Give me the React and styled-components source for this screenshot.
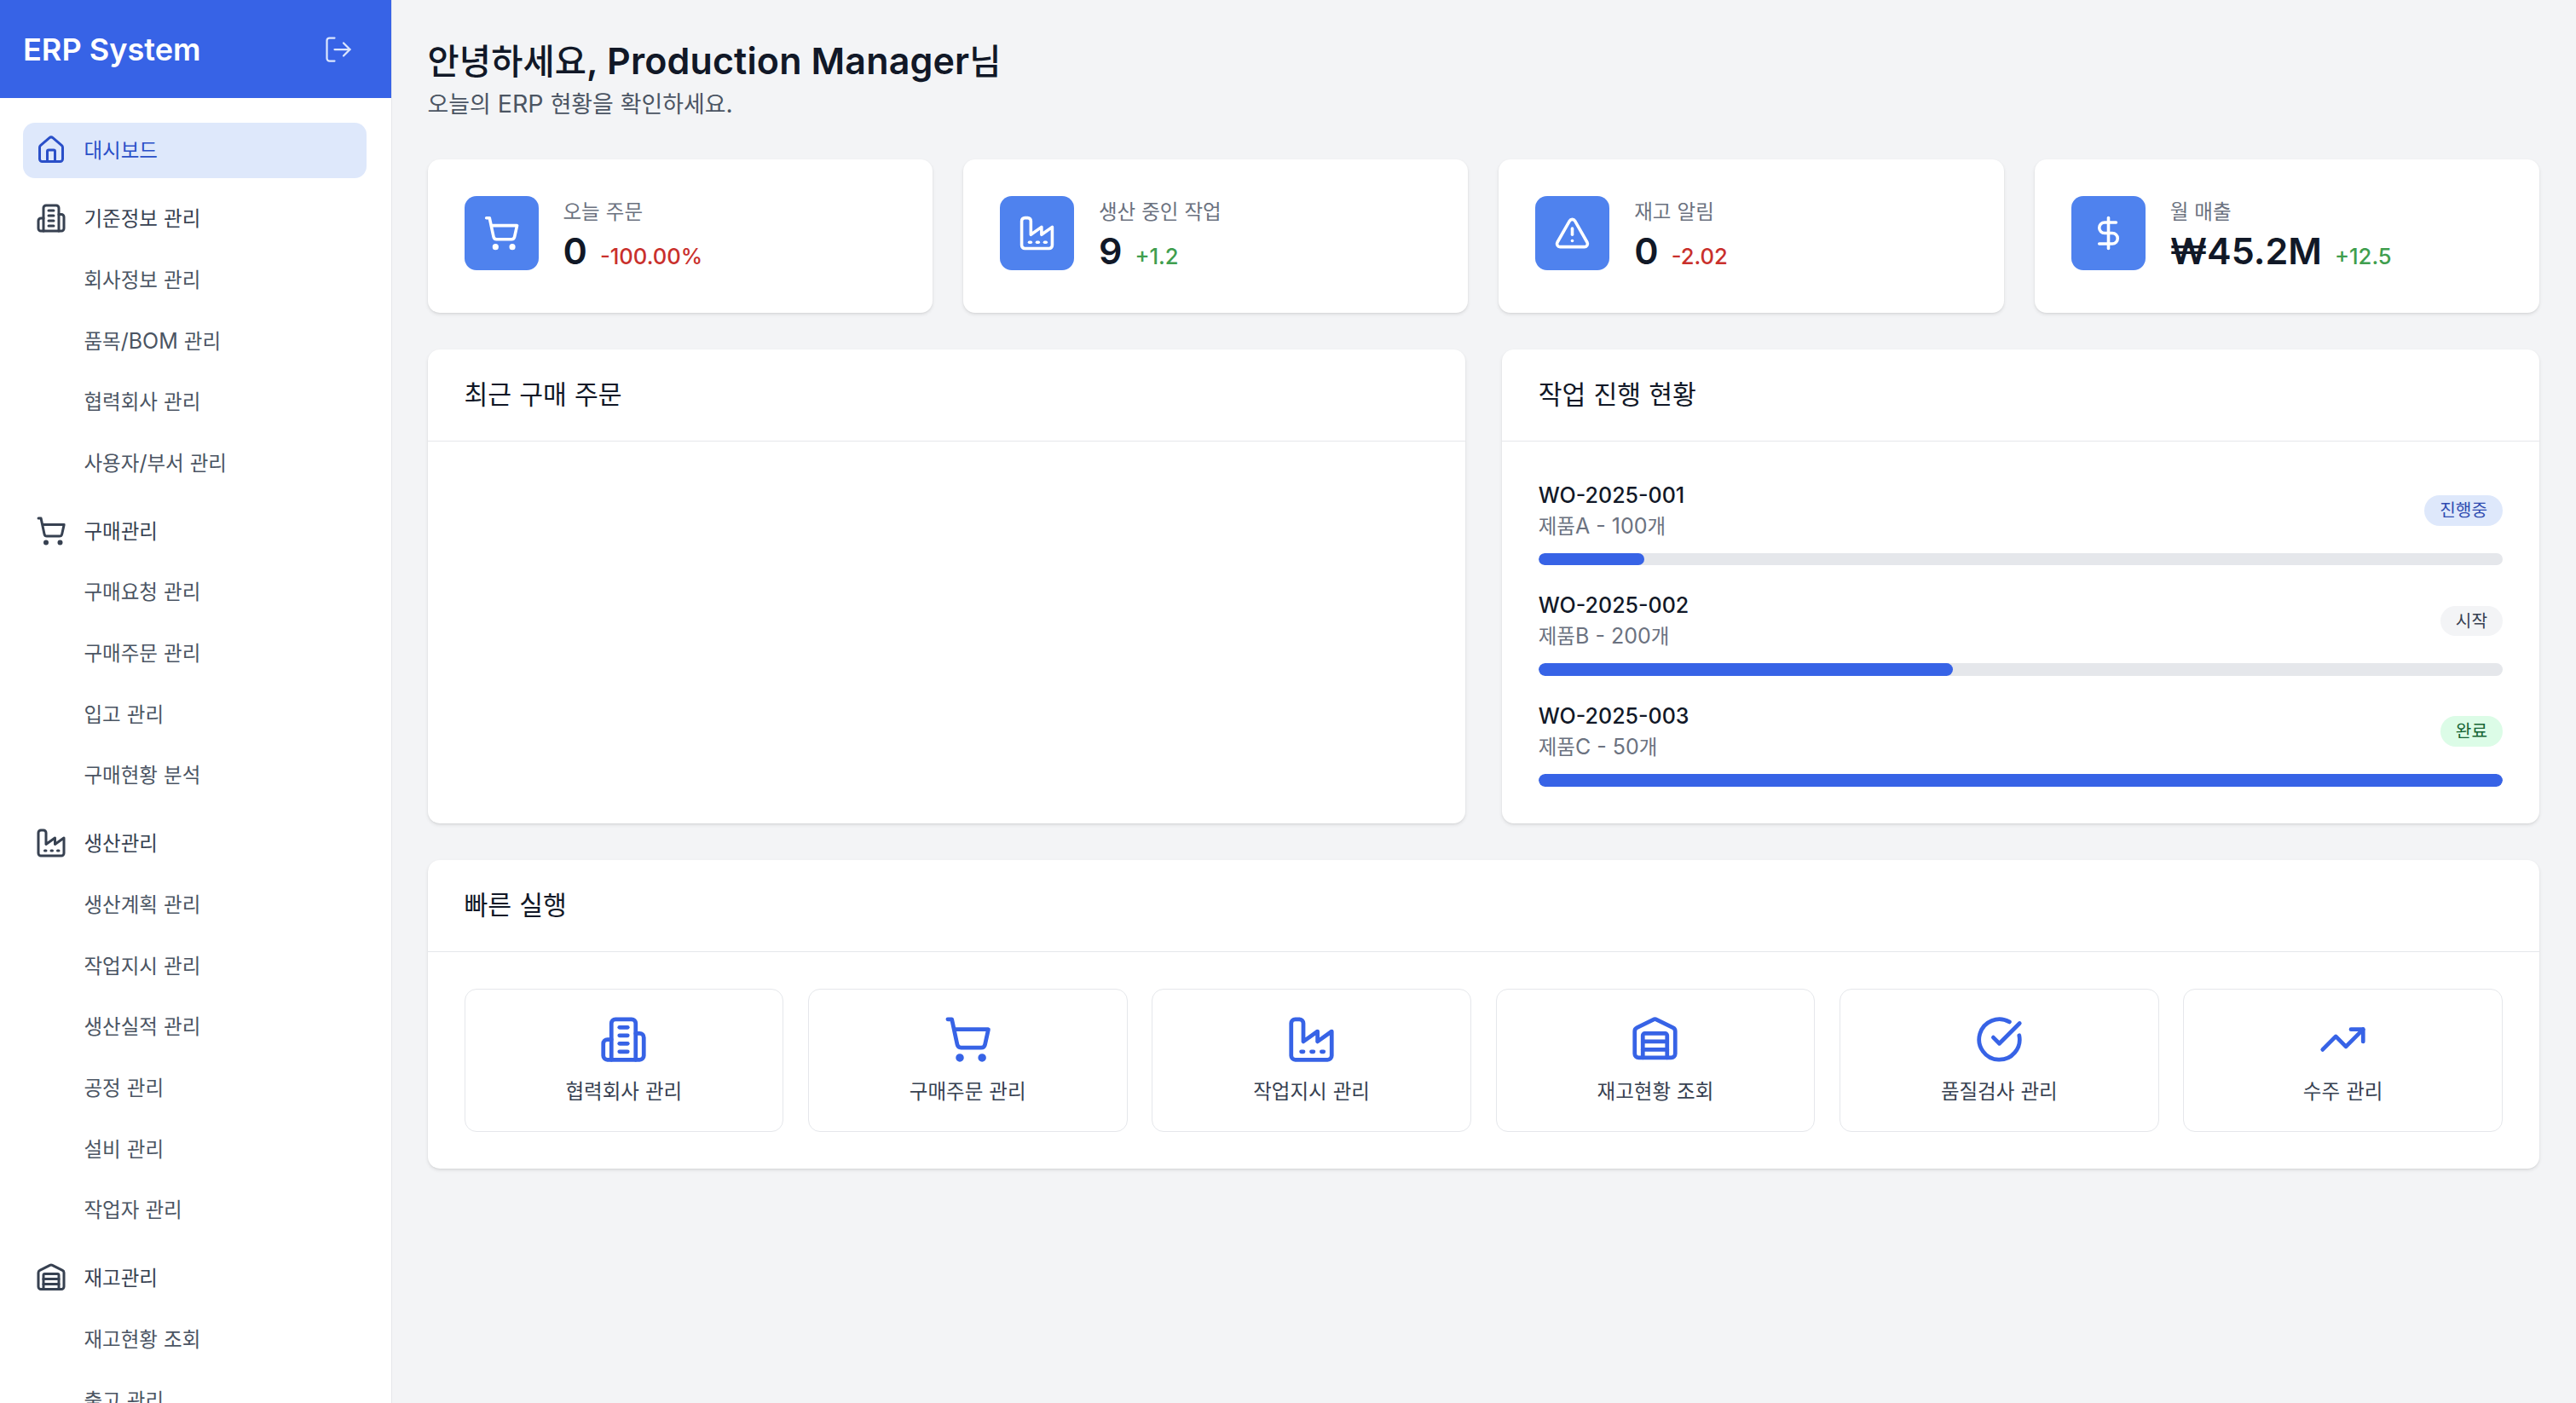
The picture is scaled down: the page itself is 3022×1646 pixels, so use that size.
import React from 'react';
import styled, { createGlobalStyle } from 'styled-components';
import { House, ShoppingCart, Warehouse, LogOut, TriangleAlert, DollarSign, CircleCheckBig, TrendingUp } from 'lucide-react';

const Global = createGlobalStyle`
  html, body { margin: 0; padding: 0; height: 100%; background: #f3f4f6; overflow: hidden; }
  * { box-sizing: border-box; }
  body { font-family: Inter, "Noto Sans CJK KR", sans-serif; color: #111827; }
`;

const HangulRun = styled.span`
  font-family: "Noto Sans CJK KR", sans-serif;
  font-size: 0.94em;
  line-height: 0;
  font-weight: ${p => p.$weight || 400};
`;

function K({ children, weight }) {
  const parts = String(children).split(/([가-힣]+)/);
  return <>{parts.map((p, i) => (/[가-힣]/.test(p) ? <HangulRun key={i} $weight={weight}>{p}</HangulRun> : p))}</>;
}

const IconSvg = styled.svg`
  fill: none; stroke: currentColor; stroke-width: 2; stroke-linecap: round; stroke-linejoin: round;
`;
const Building = () => (
  <IconSvg viewBox="0 0 24 24">
    <path d="M6 22V4a2 2 0 0 1 2-2h8a2 2 0 0 1 2 2v18Z" />
    <path d="M6 12H4a2 2 0 0 0-2 2v6a2 2 0 0 0 2 2h2" />
    <path d="M18 9h2a2 2 0 0 1 2 2v9a2 2 0 0 1-2 2h-2" />
    <path d="M10 6h4" /><path d="M10 10h4" /><path d="M10 14h4" /><path d="M10 18h4" />
  </IconSvg>
);
const Plant = () => (
  <IconSvg viewBox="0 0 24 24">
    <path d="M2 20a2 2 0 0 0 2 2h16a2 2 0 0 0 2-2V8l-7 5V8l-7 5V4a2 2 0 0 0-2-2H4a2 2 0 0 0-2 2Z" />
    <path d="M17 18h1" /><path d="M12 18h1" /><path d="M7 18h1" />
  </IconSvg>
);

const Shell = styled.div`display: flex; width: 100vw; height: 100vh; overflow: hidden;`;
const Sidebar = styled.aside`
  flex: 0 0 459.5px; height: 100%; background: #fff; border-right: 1.5px solid #e5e7eb;
  overflow: hidden; display: flex; flex-direction: column;
`;
const Brand = styled.div`
  flex: 0 0 115px; background: #3763e6; color: #fff; display: flex; align-items: center;
  justify-content: space-between; padding: 0 44px 0 27px;
`;
const BrandName = styled.div`font-size: 36.1px; font-weight: 600;`;
const LogoutIcon = styled(LogOut)`color: #dbe6fe; width: 36px; height: 36px;`;
const Nav = styled.nav`display: flex; flex-direction: column; gap: 7.16px; padding: 29px 29px 0 27px;`;
const NavRow = styled.div`
  flex: 0 0 64.5px; display: flex; align-items: center; padding-left: 14.5px; border-radius: 14px;
  font-size: 25px;
  margin-top: ${p => (p.$group ? '8.3px' : '0')};
  background: ${p => (p.$active ? '#dee8fb' : 'transparent')};
  color: ${p => (p.$active ? '#2a4fc8' : p.$group ? '#374151' : '#4b5563')};
`;
const NavIconSlot = styled.span`
  flex: 0 0 36px; height: 36px; margin-right: 21px; display: flex;
  svg { width: 36px; height: 36px; }
`;

const Main = styled.main`flex: 1; padding: 43px 43px 0 42px; min-width: 0;`;
const Title = styled.h1`margin: 0; font-size: 43px; line-height: 57px; font-weight: 600; letter-spacing: 0.14px; color: #111827;`;
const Subtitle = styled.p`margin: 0 0 43.5px; font-size: 28.6px; line-height: 43px; color: #4b5563;`;

const StatGrid = styled.div`display: grid; grid-template-columns: repeat(4, 1fr); gap: 36px; margin-bottom: 43px;`;
const Card = styled.section`
  background: #fff; border-radius: 14px; box-shadow: 0 2px 4px rgba(0,0,0,.09), 0 1px 2px rgba(0,0,0,.05);
`;
const StatCard = styled(Card)`display: flex; align-items: flex-start; gap: 29px; padding: 43px; height: 180px;`;
const StatIcon = styled.div`
  flex: 0 0 87px; height: 87px; border-radius: 14px; background: #4f82ee; color: #fff;
  display: flex; align-items: center; justify-content: center;
  svg { width: 43px; height: 43px; }
`;
const StatLabel = styled.div`font-size: 25px; line-height: 36px; color: #6b7280;`;
const StatValueRow = styled.div`display: flex; align-items: baseline; gap: 15px;`;
const StatValue = styled.div`font-size: 43px; line-height: 57px; font-weight: 600; color: #111827;`;
const StatChange = styled.div`
  font-size: 25.6px; font-weight: 500;
  color: ${p => (p.$up ? '#3f9e4e' : '#c9302c')};
`;

const PanelGrid = styled.div`display: grid; grid-template-columns: 1fr 1fr; gap: 43px; margin-bottom: 43px;`;
const PanelHead = styled.header`
  padding: 28.6px 43px; border-bottom: 1.8px solid #e5e7eb;
  font-size: 32.2px; line-height: 50px; color: #111827;
`;
const PanelBody = styled.div`padding: 43px;`;
const WorkList = styled.div`display: flex; flex-direction: column; gap: 29.5px; padding-top: 2px;`;
const WorkTop = styled.div`display: flex; justify-content: space-between; align-items: center; margin-bottom: 14px;`;
const WorkCode = styled.div`font-size: 25px; line-height: 36px; font-weight: 500; color: #111827;`;
const WorkDesc = styled.div`font-size: 25px; line-height: 36px; color: #6b7280;`;
const Badge = styled.span`
  padding: 0 18px; height: 35.8px; line-height: 35.8px; border-radius: 999px; font-size: 21.5px;
  background: ${p => p.$bg}; color: ${p => p.$fg};
`;
const Track = styled.div`height: 14.3px; border-radius: 999px; background: #e5e7eb; overflow: hidden;`;
const Fill = styled.div`height: 100%; border-radius: 999px; background: #3763e6;`;

const ActionGrid = styled.div`display: grid; grid-template-columns: repeat(6, 1fr); gap: 28.6px;`;
const ActionButton = styled.div`
  height: 168px; border: 1.8px solid #e5e7eb; border-radius: 14px; display: flex; flex-direction: column;
  align-items: center; padding-top: 30px; font-size: 25px; color: #374151;
  svg { width: 57px; height: 57px; color: #3763e6; margin-bottom: 14px; }
`;
const ActionLabel = styled.div`line-height: 36px;`;

const nav = [
  { label: '대시보드', Icon: House, active: true },
  { label: '기준정보 관리', Icon: Building, group: true },
  { label: '회사정보 관리' }, { label: '품목/BOM 관리' }, { label: '협력회사 관리' }, { label: '사용자/부서 관리' },
  { label: '구매관리', Icon: ShoppingCart, group: true },
  { label: '구매요청 관리' }, { label: '구매주문 관리' }, { label: '입고 관리' }, { label: '구매현황 분석' },
  { label: '생산관리', Icon: Plant, group: true },
  { label: '생산계획 관리' }, { label: '작업지시 관리' }, { label: '생산실적 관리' }, { label: '공정 관리' }, { label: '설비 관리' }, { label: '작업자 관리' },
  { label: '재고관리', Icon: Warehouse, group: true },
  { label: '재고현황 조회' }, { label: '출고 관리' },
];
const stats = [
  { label: '오늘 주문', value: '0', change: '-100.00%', Icon: ShoppingCart },
  { label: '생산 중인 작업', value: '9', change: '+1.2', up: true, Icon: Plant },
  { label: '재고 알림', value: '0', change: '-2.02', Icon: TriangleAlert },
  { label: '월 매출', value: '₩45.2M', change: '+12.5', up: true, Icon: DollarSign },
];
const works = [
  { code: 'WO-2025-001', desc: '제품A - 100개', status: '진행중', bg: '#dee8fb', fg: '#2e4bb0', pct: 11 },
  { code: 'WO-2025-002', desc: '제품B - 200개', status: '시작', bg: '#f3f4f6', fg: '#374151', pct: 43 },
  { code: 'WO-2025-003', desc: '제품C - 50개', status: '완료', bg: '#dcfce7', fg: '#166534', pct: 100 },
];
const actions = [
  { label: '협력회사 관리', Icon: Building },
  { label: '구매주문 관리', Icon: ShoppingCart },
  { label: '작업지시 관리', Icon: Plant },
  { label: '재고현황 조회', Icon: Warehouse },
  { label: '품질검사 관리', Icon: CircleCheckBig },
  { label: '수주 관리', Icon: TrendingUp },
];

export default function App() {
  return (
    <Shell>
      <Global />
      <Sidebar>
        <Brand>
          <BrandName>ERP System</BrandName>
          <LogoutIcon strokeWidth={1.5} />
        </Brand>
        <Nav>
          {nav.map(({ label, Icon, active, group }) => (
            <NavRow key={label} $active={active} $group={group}>
              <NavIconSlot>{Icon && <Icon />}</NavIconSlot>
              <span><K>{label}</K></span>
            </NavRow>
          ))}
        </Nav>
      </Sidebar>
      <Main>
        <Title><K weight={500}>안녕하세요, Production Manager님</K></Title>
        <Subtitle><K>오늘의 ERP 현황을 확인하세요.</K></Subtitle>
        <StatGrid>
          {stats.map(({ label, value, change, up, Icon }) => (
            <StatCard key={label}>
              <StatIcon><Icon /></StatIcon>
              <div>
                <StatLabel><K>{label}</K></StatLabel>
                <StatValueRow>
                  <StatValue>{value}</StatValue>
                  <StatChange $up={up}>{change}</StatChange>
                </StatValueRow>
              </div>
            </StatCard>
          ))}
        </StatGrid>
        <PanelGrid>
          <Card>
            <PanelHead><K>최근 구매 주문</K></PanelHead>
          </Card>
          <Card>
            <PanelHead><K>작업 진행 현황</K></PanelHead>
            <PanelBody>
              <WorkList>
                {works.map(w => (
                  <div key={w.code}>
                    <WorkTop>
                      <div>
                        <WorkCode>{w.code}</WorkCode>
                        <WorkDesc><K>{w.desc}</K></WorkDesc>
                      </div>
                      <Badge $bg={w.bg} $fg={w.fg}><K>{w.status}</K></Badge>
                    </WorkTop>
                    <Track><Fill style={{ width: `${w.pct}%` }} /></Track>
                  </div>
                ))}
              </WorkList>
            </PanelBody>
          </Card>
        </PanelGrid>
        <Card>
          <PanelHead><K>빠른 실행</K></PanelHead>
          <PanelBody>
            <ActionGrid>
              {actions.map(({ label, Icon }) => (
                <ActionButton key={label}>
                  <Icon />
                  <ActionLabel><K>{label}</K></ActionLabel>
                </ActionButton>
              ))}
            </ActionGrid>
          </PanelBody>
        </Card>
      </Main>
    </Shell>
  );
}
